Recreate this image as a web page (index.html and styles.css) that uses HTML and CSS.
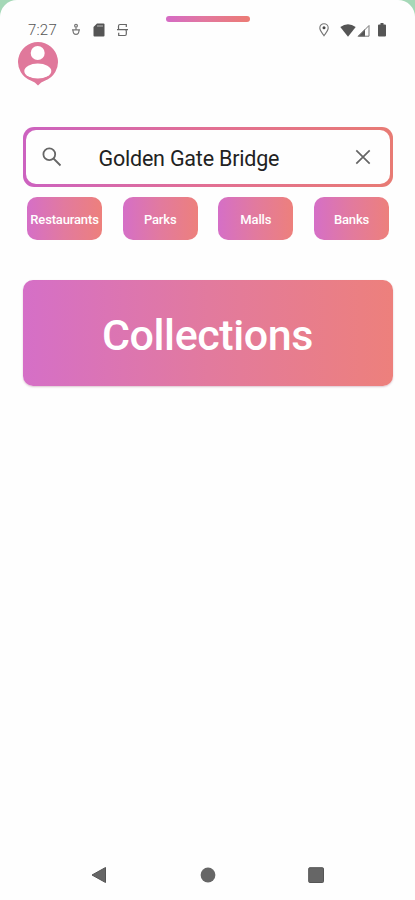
FILE: index.html
```html
<!DOCTYPE html>
<html lang="en">
<head>
<meta charset="utf-8">
<title>Map search</title>
<link rel="stylesheet" href="styles.css">
</head>
<body>
<main class="sheet">
  <header class="status">
    <span class="time">7:27</span>
    <svg class="ic-bug" width="10" height="14" viewBox="0 0 10 14" fill="none" stroke="#777" stroke-width="1.2"><circle cx="5" cy="2.700" r="1.400"/><path d="M5 4.500v2.500M1 6.800h8M2 7.200c0 5.500 6 5.500 6 0"/></svg>
    <svg class="ic-card" width="12" height="14" viewBox="0 0 12 14"><path fill="#555" d="M4 .5h6.500a1 1 0 0 1 1 1v11a1 1 0 0 1-1 1h-9a1 1 0 0 1-1-1V4z"/><path stroke="#bbb" d="M5 2v2M7 2v2M9 2v2"/></svg>
    <svg class="ic-s" width="11" height="14" viewBox="0 0 11 14" fill="none" stroke="#666" stroke-width="1.200"><path d="M9.300 4V1.500H3Q1.500 1.500 1.500 3V5.200Q1.500 6.700 3 6.700H8Q9.300 6.700 9.300 8V11Q9.300 12.500 8 12.500H1.700V9.800M0 6.700h3M8 6.700h3"/></svg>
    <span class="spacer"></span>
    <svg class="ic-pin" width="10" height="14" viewBox="0 0 10 14"><path fill="none" stroke="#777" stroke-width="1.100" d="M5 12.800C3 9.800.8 7.500.8 4.900a4.200 4.200 0 0 1 8.400 0C9.200 7.500 7 9.800 5 12.800Z"/><circle cx="5" cy="4.800" r="1.500" fill="#444"/></svg>
    <svg class="ic-wifi" width="16" height="13" viewBox="0 0 16 13"><path fill="#555" d="M.3 3Q8-2.500 15.700 3L8 12.700Z"/></svg>
    <svg class="ic-signal" width="13" height="13" viewBox="0 0 13 13"><path fill="#555" d="M.5 12.500 8 5v7.500Z"/><path fill="none" stroke="#777" d="M1.500 12.200 12 1.500v10.700Z"/></svg>
    <svg class="ic-battery" width="8" height="14" viewBox="0 0 8 14"><path fill="#555" d="M2.500 0h3v1.500H7q1 0 1 1v10q0 1-1 1H1q-1 0-1-1v-10q0-1 1-1h1.500Z"/></svg>
    <span class="handle"></span>
  </header>

  <svg class="avatar" width="40" height="44" viewBox="0 0 40 44"><path fill="#e0789b" d="M20 0a20 20 0 0 1 6.800 38.800Q23 40 20 43.500Q17 40 13.200 38.800A20 20 0 0 1 20 0Z"/><circle cx="19.700" cy="11" r="7" fill="#fff"/><ellipse cx="19.800" cy="29" rx="13.500" ry="7.500" fill="#fff"/></svg>

  <section class="search">
    <div class="field">
      <svg class="glass" width="20" height="20" viewBox="0 0 20 20" fill="none" stroke="#666" stroke-width="1.800"><circle cx="7.300" cy="7.300" r="5.900"/><path d="m11.500 11.500 7 7"/></svg>
      <span class="query">Golden Gate Bridge</span>
      <svg class="clear" width="16" height="16" viewBox="0 0 16 16" stroke="#666" stroke-width="1.700"><path d="m1.300 1.300 13.400 13.400M14.700 1.300 1.300 14.700"/></svg>
    </div>
  </section>

  <nav class="chips">
    <span class="chip">Restaurants</span>
    <span class="chip">Parks</span>
    <span class="chip">Malls</span>
    <span class="chip">Banks</span>
  </nav>

  <section class="collections"><span>Collections</span></section>

  <footer class="navbar">
    <svg width="16" height="18" viewBox="0 0 16 18"><path fill="#666" stroke="#555" stroke-linejoin="round" d="M1 9 14.500 1.500v15Z"/></svg>
    <svg width="16" height="16" viewBox="0 0 16 16"><circle cx="8" cy="8" r="7.400" fill="#666"/></svg>
    <svg width="16" height="16" viewBox="0 0 16 16"><rect x=".7" y=".7" width="14.800" height="14.800" rx="1" fill="#666" stroke="#555"/></svg>
  </footer>
</main>
</body>
</html>
```
FILE: styles.css
```css
* { box-sizing: border-box; }
body {
  margin: 0;
  background: #a5d8b7;
  font-family: Roboto, "Liberation Sans", sans-serif;
}
svg { display: block; flex: none; }
.sheet {
  height: 900px;
  display: flex;
  flex-direction: column;
  background: #fefefe;
  border-radius: 17px 17px 0 0;
  overflow: hidden;
}
.status {
  position: relative;
  height: 42px;
  padding: 18px 29px 0 28px;
  display: flex;
  align-items: center;
}
.time {
  width: 43px;
  font-size: 15px;
  font-weight: 300;
  letter-spacing: .2px;
  color: #555;
}
.ic-card { margin-left: 12px; }
.ic-s { margin-left: 12px; }
.spacer { flex: 1; }
.ic-wifi { margin-left: 11px; }
.ic-signal { margin-left: 1px; }
.ic-battery { margin-left: 8px; }
.handle {
  position: absolute;
  left: 166px;
  top: 16px;
  width: 84px;
  height: 6px;
  border-radius: 3px;
  background: linear-gradient(90deg, #d56bc5, #e2779f 45%, #ec7b74);
}
.avatar { margin-left: 18px; }
.search {
  width: 370px;
  height: 60px;
  margin: 41px 0 0 22.500px;
  padding: 3px;
  border-radius: 11px;
  background: linear-gradient(90deg, #cc62c0, #e26f93 50%, #e87b74);
}
.field {
  height: 100%;
  padding: 0 19px 0 16px;
  display: flex;
  align-items: center;
  background: #fefefe;
  border-radius: 10px;
}
.query {
  flex: 1;
  margin-left: 37px;
  padding-top: 3px;
  font-size: 21.500px;
  letter-spacing: -.21px;
  color: #222;
  white-space: nowrap;
}
.chips {
  margin: 10px 26px 0 27px;
  display: flex;
  justify-content: space-between;
}
.chip {
  width: 75px;
  height: 43px;
  padding-top: 1px;
  display: flex;
  align-items: center;
  justify-content: center;
  border-radius: 10px;
  background: linear-gradient(90deg, #d56fc7, #e27a9e 50%, #ed807c);
  color: #fff;
  font-size: 13px;
  font-weight: 500;
  letter-spacing: -.15px;
}
.collections {
  width: 370px;
  height: 106px;
  margin: 40px 0 0 22.500px;
  display: flex;
  align-items: center;
  justify-content: center;
  border-radius: 10px;
  background: linear-gradient(90deg, #d56fc7, #e27a9e 50%, #ed807c);
  box-shadow: 0 1px 2px rgba(140, 70, 100, .3);
  color: #fff;
  font-size: 43px;
  font-weight: 500;
  letter-spacing: -.4px;
}
.collections span { padding-top: 3px; }
.navbar {
  height: 50px;
  margin-top: auto;
  padding: 0 91px;
  display: flex;
  align-items: center;
  justify-content: space-between;
}
```
